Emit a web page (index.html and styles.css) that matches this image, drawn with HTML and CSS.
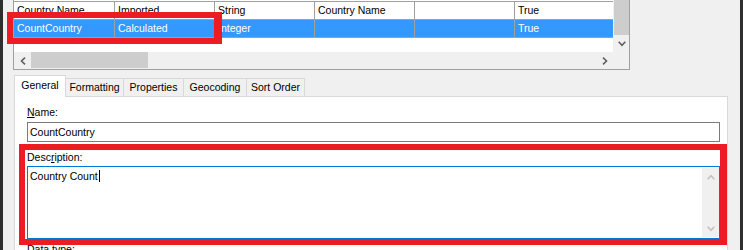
FILE: index.html
```html
<!DOCTYPE html>
<html lang="en">
<head>
    <meta charset="UTF-8">
    <title>Field Properties</title>
    <link rel="stylesheet" href="styles.css">
</head>
<body>

    <div class="frame">

        <!-- field list -->
        <div class="grid">
            <div class="rows">
                <div class="row">
                    <span class="cell">Country Name</span>
                    <span class="cell">Imported</span>
                    <span class="cell">String</span>
                    <span class="cell">Country Name</span>
                    <span class="cell"></span>
                    <span class="cell">True</span>
                </div>
                <div class="row selected">
                    <span class="cell">CountCountry</span>
                    <span class="cell">Calculated</span>
                    <span class="cell">Integer</span>
                    <span class="cell"></span>
                    <span class="cell"></span>
                    <span class="cell">True</span>
                </div>
            </div>
            <div class="vscroll">
                <div class="thumb-v"></div>
                <div class="arrow-btn">
                    <svg width="8" height="6" viewBox="0 0 8 6"><polyline points="0.7,0.7 4,4.3 7.3,0.7" /></svg>
                </div>
            </div>
            <div class="hscroll">
                <div class="arrow-btn">
                    <svg width="6" height="8" viewBox="0 0 6 8"><polyline points="5,0.7 1.5,4 5,7.3" /></svg>
                </div>
                <div class="thumb-h"></div>
                <div class="arrow-btn right">
                    <svg width="6" height="8" viewBox="0 0 6 8"><polyline points="1,0.7 4.5,4 1,7.3" /></svg>
                </div>
            </div>
            <div class="corner"></div>
        </div>

        <!-- tabs -->
        <div class="tabs">
            <div class="tab active tab-general">General</div>
            <div class="tab tab-formatting">Formatting</div>
            <div class="tab tab-properties">Properties</div>
            <div class="tab tab-geocoding">Geocoding</div>
            <div class="tab tab-sort">Sort Order</div>
        </div>

        <div class="panel">
            <div class="label"><u>N</u>ame:</div>
            <div class="textbox">CountCountry</div>

            <div class="label label-desc">Desc<u>r</u>iption:</div>
            <div class="textarea">
                <div class="textarea-text">Country Count<span class="caret"></span></div>
                <div class="textarea-scroll">
                    <div class="arrow-btn light">
                        <svg width="8" height="6" viewBox="0 0 8 6"><polyline points="0.7,5.3 4,1.7 7.3,5.3" /></svg>
                    </div>
                    <div class="arrow-btn light">
                        <svg width="8" height="6" viewBox="0 0 8 6"><polyline points="0.7,0.7 4,4.3 7.3,0.7" /></svg>
                    </div>
                </div>
            </div>

            <div class="label label-type">Data type:</div>
        </div>
    </div>

    <!-- highlight boxes drawn over the dialog -->
    <div class="mark mark-row"></div>
    <div class="mark mark-desc"></div>

</body>
</html>
```

FILE: styles.css
```css
body {
    margin: 0;
    background-color: #f0f0f0;
    font-family: 'Liberation Sans', Arial, sans-serif;
    font-size: 10.5px;
    color: #000;
    overflow: hidden;
}

.frame {
    height: 250px;
    box-sizing: border-box;
    border-left: 3px solid #2e2e2e;
    border-right: 3px solid #2e2e2e;
    overflow: hidden;
}

/* field list */
.grid {
    margin-left: 10px;
    width: 617px;
    box-sizing: border-box;
    border: 1px solid #a0a0a0;
    border-top: none;
    display: grid;
    grid-template-columns: 599px 16px;
    grid-template-rows: 52px 17px;
}

.rows {
    background-color: #fff;
    padding-top: 1px;
}

.row {
    display: grid;
    grid-template-columns: 101px 100px 100px 100px 100px 1fr;
    height: 17px;
    border-bottom: 1px solid #a0a0a0;
}

.row:first-child {
    border-top: 1px solid #a0a0a0;
}

.row.selected {
    background-color: #3399ff;
    color: #fff;
}

.cell {
    padding-left: 3px;
    line-height: 17px;
    border-right: 1px solid #a0a0a0;
    white-space: nowrap;
    overflow: hidden;
}

.cell:last-child {
    border-right: none;
}

.vscroll {
    display: flex;
    flex-direction: column;
    background-color: #f0f0f0;
}

.thumb-v {
    height: 35px;
    margin-left: 1px;
    background-color: #cdcdcd;
}

.hscroll {
    display: flex;
    background-color: #f0f0f0;
}

.thumb-h {
    width: 117px;
    height: 16px;
    background-color: #cdcdcd;
}

.hscroll .right {
    margin-left: auto;
}

.corner {
    background-color: #f0f0f0;
}

.arrow-btn {
    width: 17px;
    height: 17px;
    display: flex;
    align-items: center;
    justify-content: center;
}

.arrow-btn svg polyline {
    fill: none;
    stroke: #606060;
    stroke-width: 1.6;
}

.arrow-btn.light svg polyline {
    stroke: #c2c2c2;
}

/* tabs */
.tabs {
    display: flex;
    align-items: flex-end;
    height: 21px;
    margin: 5px 0 0 11px;
}

.tab {
    height: 18px;
    box-sizing: border-box;
    border-top: 1px solid #d9d9d9;
    border-right: 1px solid #d9d9d9;
    background-color: #f0f0f0;
    line-height: 17px;
    text-align: center;
    white-space: nowrap;
}

.tab.active {
    position: relative;
    z-index: 1;
    height: 22px;
    margin-bottom: -1px;
    border-left: 1px solid #d9d9d9;
    background-color: #fff;
    padding-top: 1px;
    line-height: 17px;
}

.tab-general { width: 52px; }
.tab-formatting { width: 58px; }
.tab-properties { width: 60px; }
.tab-geocoding { width: 63px; }
.tab-sort { width: 58px; }

.panel {
    width: 714px;
    height: 200px;
    box-sizing: border-box;
    margin-left: 11px;
    border: 1px solid #d9d9d9;
    background-color: #fff;
    padding: 9px 7px 0 12px;
}

.label {
    line-height: 13px;
}

.label u {
    text-underline-offset: 1px;
}

.textbox {
    margin-top: 3px;
    height: 20px;
    box-sizing: border-box;
    border: 1px solid #7a7a7a;
    padding-left: 2px;
    line-height: 18px;
}

.label-desc {
    margin-top: 9px;
}

.textarea {
    margin-top: 2px;
    height: 73px;
    box-sizing: border-box;
    border: 1px solid #0078d7;
    display: flex;
}

.textarea-text {
    flex: 1;
    padding: 3px 2px;
    line-height: 13px;
}

.caret {
    display: inline-block;
    width: 1px;
    height: 12px;
    margin-left: 1px;
    background-color: #000;
    vertical-align: -2px;
}

.textarea-scroll {
    width: 17px;
    margin: 1px 0;
    background-color: #f0f0f0;
    display: flex;
    flex-direction: column;
    justify-content: space-between;
}

.label-type {
    margin-top: 4px;
}

/* red highlight boxes */
.mark {
    position: absolute;
    box-sizing: border-box;
    border: 6px solid #ed1c24;
}

.mark-row {
    left: 7px;
    top: 12px;
    width: 215px;
    height: 32px;
    border-right-width: 8px;
}

.mark-desc {
    left: 19px;
    top: 144px;
    width: 708px;
    height: 101px;
    border-right-width: 7px;
}
```
